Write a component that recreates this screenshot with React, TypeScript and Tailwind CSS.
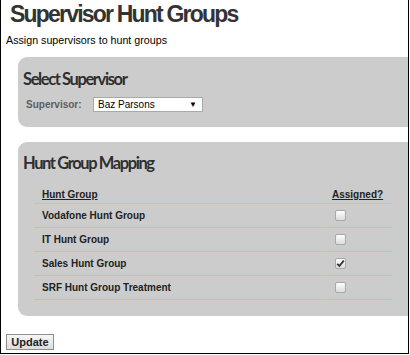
import React from "react";

const rows = [
  { name: "Vodafone Hunt Group", checked: false },
  { name: "IT Hunt Group", checked: false },
  { name: "Sales Hunt Group", checked: true },
  { name: "SRF Hunt Group Treatment", checked: false },
];

function Check({ checked }: { checked: boolean }) {
  return (
    <div className="w-[11px] h-[11px] rounded-[2px] border border-[#a8a8a8] bg-gradient-to-b from-[#fdfdfd] to-[#dcdcdc] flex items-center justify-center">
      {checked && (
        <svg width="9" height="9" viewBox="0 0 9 9">
          <path d="M1.2 4.8 L3.4 7 L7.8 1.6" stroke="#333" strokeWidth="1.8" fill="none" />
        </svg>
      )}
    </div>
  );
}

export default function App() {
  return (
    <div
      className="w-[409px] h-[354px] border-l border-r border-b border-black bg-white overflow-hidden text-[#222]"
      style={{ fontFamily: '"Liberation Sans", Arial, sans-serif' }}
    >
      <div className="h-[28px] leading-[28px] text-[23px] font-bold text-[#333] pl-[9px] tracking-[-1.8px] whitespace-nowrap">
        Supervisor Hunt Groups
      </div>
      <div className="mt-[5px] pl-[5px] text-[10.7px] leading-[14px] text-black">
        Assign supervisors to hunt groups
      </div>

      <div className="mt-[10px] ml-[17px] h-[70px] bg-[#cccccc] rounded-l-[9px] pt-[12px]">
        <div
          className="pl-[5px] text-[16.5px] leading-[20px] font-bold text-[#2f2f2f] tracking-[-1.4px]"
          style={{ fontFamily: 'Lato, "Open Sans", sans-serif' }}
        >
          Select Supervisor
        </div>
        <div className="mt-[8px] flex items-center pl-[8px]">
          <span className="w-[67px] text-[10px] font-bold text-[#5e5e5e]">Supervisor:</span>
          <div className="w-[110px] h-[15px] bg-white border border-[#a9a9a9] flex items-center justify-between pl-[4px] pr-[5px]">
            <span className="text-[10px] leading-[12px] text-black">Baz Parsons</span>
            <span className="text-[8px] leading-[8px] text-black">▼</span>
          </div>
        </div>
      </div>

      <div className="mt-[15px] ml-[17px] bg-[#cccccc] rounded-l-[9px] pt-[11px] pb-[16px]">
        <div
          className="pl-[5px] text-[16.5px] leading-[20px] font-bold text-[#2f2f2f] tracking-[-1.4px]"
          style={{ fontFamily: 'Lato, "Open Sans", sans-serif' }}
        >
          Hunt Group Mapping
        </div>
        <div className="mt-[10px] ml-[16px] flex flex-col text-[10px] font-bold">
          <div className="flex h-[21px] gap-[1px]">
            <div className="w-[288px] border-b border-[#a6cbe0] flex items-end pb-[2px] pl-[8px] leading-[12px]">
              <span className="underline">Hunt Group</span>
            </div>
            <div className="w-[69px] border-b border-[#a6cbe0] flex items-end pb-[2px] pl-[9px] leading-[12px]">
              <span className="underline">Assigned?</span>
            </div>
          </div>
          {rows.map((r) => (
            <div key={r.name} className="flex h-[24px] gap-[1px]">
              <div className="w-[288px] border-b border-[#a9c6d8] flex items-center pl-[8px]">
                {r.name}
              </div>
              <div className="w-[69px] border-b border-[#a9c6d8] flex items-center pl-[12px]">
                <Check checked={r.checked} />
              </div>
            </div>
          ))}
        </div>
      </div>

      <div className="mt-[18px] ml-[5px]">
        <button className="w-[48px] h-[16px] border border-[#8f8f8f] bg-gradient-to-b from-[#f6f6f6] to-[#dddddd] text-[11px] font-bold leading-[12px] text-[#222] flex items-center justify-center">
          Update
        </button>
      </div>
    </div>
  );
}
